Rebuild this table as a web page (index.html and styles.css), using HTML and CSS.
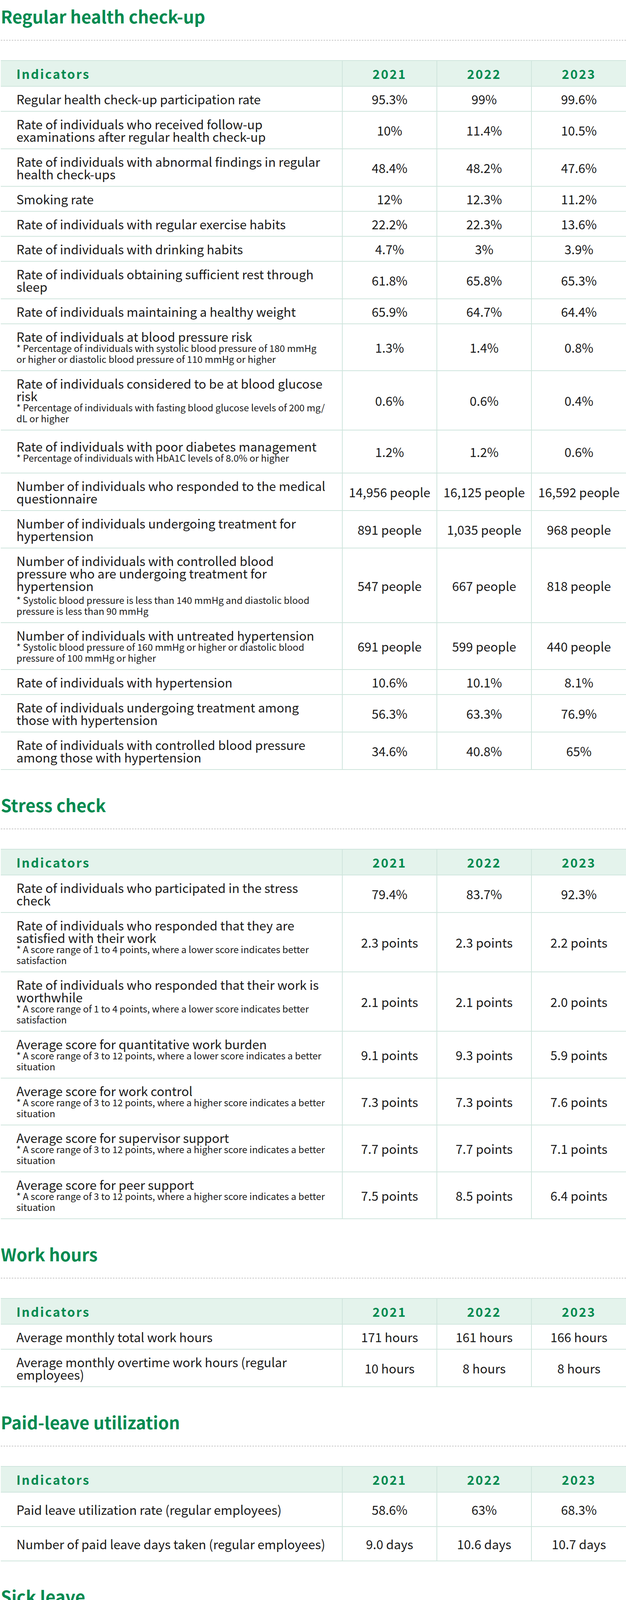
FILE: index.html
```html
<!DOCTYPE html>
<html lang="en">
<head>
<meta charset="utf-8">
<title>Health indicators</title>
<link rel="stylesheet" href="styles.css">
</head>
<body>
<main class="page">

<section class="block">
  <h2 class="block-title">Regular health check-up</h2>
  <table class="data">
    <colgroup><col class="c-ind"><col class="c-y"><col class="c-y"><col class="c-y"></colgroup>
    <thead><tr><th class="h-ind">Indicators</th><th>2021</th><th>2022</th><th>2023</th></tr></thead>
    <tbody>
      <tr><td class="label">Regular health check-up participation rate</td><td>95.3%</td><td>99%</td><td>99.6%</td></tr>
      <tr><td class="label">Rate of individuals who received follow-up<br>examinations after regular health check-up</td><td>10%</td><td>11.4%</td><td>10.5%</td></tr>
      <tr><td class="label">Rate of individuals with abnormal findings in regular<br>health check-ups</td><td>48.4%</td><td>48.2%</td><td>47.6%</td></tr>
      <tr><td class="label">Smoking rate</td><td>12%</td><td>12.3%</td><td>11.2%</td></tr>
      <tr><td class="label">Rate of individuals with regular exercise habits</td><td>22.2%</td><td>22.3%</td><td>13.6%</td></tr>
      <tr><td class="label">Rate of individuals with drinking habits</td><td>4.7%</td><td>3%</td><td>3.9%</td></tr>
      <tr><td class="label">Rate of individuals obtaining sufficient rest through<br>sleep</td><td>61.8%</td><td>65.8%</td><td>65.3%</td></tr>
      <tr><td class="label">Rate of individuals maintaining a healthy weight</td><td>65.9%</td><td>64.7%</td><td>64.4%</td></tr>
      <tr><td class="label">Rate of individuals at blood pressure risk<p class="note">* Percentage of individuals with systolic blood pressure of 180 mmHg<br>or higher or diastolic blood pressure of 110 mmHg or higher</p></td><td>1.3%</td><td>1.4%</td><td>0.8%</td></tr>
      <tr><td class="label">Rate of individuals considered to be at blood glucose<br>risk<p class="note">* Percentage of individuals with fasting blood glucose levels of 200 mg/<br>dL or higher</p></td><td>0.6%</td><td>0.6%</td><td>0.4%</td></tr>
      <tr><td class="label label-roomy">Rate of individuals with poor diabetes management<p class="note">* Percentage of individuals with HbA1C levels of 8.0% or higher</p></td><td>1.2%</td><td>1.2%</td><td>0.6%</td></tr>
      <tr><td class="label">Number of individuals who responded to the medical<br>questionnaire</td><td>14,956 people</td><td>16,125 people</td><td>16,592 people</td></tr>
      <tr><td class="label">Number of individuals undergoing treatment for<br>hypertension</td><td>891 people</td><td>1,035 people</td><td>968 people</td></tr>
      <tr><td class="label">Number of individuals with controlled blood<br>pressure who are undergoing treatment for<br>hypertension<p class="note note-gap">* Systolic blood pressure is less than 140 mmHg and diastolic blood<br>pressure is less than 90 mmHg</p></td><td>547 people</td><td>667 people</td><td>818 people</td></tr>
      <tr><td class="label">Number of individuals with untreated hypertension<p class="note">* Systolic blood pressure of 160 mmHg or higher or diastolic blood<br>pressure of 100 mmHg or higher</p></td><td>691 people</td><td>599 people</td><td>440 people</td></tr>
      <tr><td class="label">Rate of individuals with hypertension</td><td>10.6%</td><td>10.1%</td><td>8.1%</td></tr>
      <tr><td class="label">Rate of individuals undergoing treatment among<br>those with hypertension</td><td>56.3%</td><td>63.3%</td><td>76.9%</td></tr>
      <tr><td class="label">Rate of individuals with controlled blood pressure<br>among those with hypertension</td><td>34.6%</td><td>40.8%</td><td>65%</td></tr>
    </tbody>
  </table>
</section>

<section class="block">
  <h2 class="block-title">Stress check</h2>
  <table class="data">
    <colgroup><col class="c-ind"><col class="c-y"><col class="c-y"><col class="c-y"></colgroup>
    <thead><tr><th class="h-ind">Indicators</th><th>2021</th><th>2022</th><th>2023</th></tr></thead>
    <tbody>
      <tr><td class="label">Rate of individuals who participated in the stress<br>check</td><td>79.4%</td><td>83.7%</td><td>92.3%</td></tr>
      <tr><td class="label">Rate of individuals who responded that they are<br>satisfied with their work<p class="note">* A score range of 1 to 4 points, where a lower score indicates better<br>satisfaction</p></td><td>2.3 points</td><td>2.3 points</td><td>2.2 points</td></tr>
      <tr><td class="label">Rate of individuals who responded that their work is<br>worthwhile<p class="note">* A score range of 1 to 4 points, where a lower score indicates better<br>satisfaction</p></td><td>2.1 points</td><td>2.1 points</td><td>2.0 points</td></tr>
      <tr><td class="label">Average score for quantitative work burden<p class="note">* A score range of 3 to 12 points, where a lower score indicates a better<br>situation</p></td><td>9.1 points</td><td>9.3 points</td><td>5.9 points</td></tr>
      <tr><td class="label">Average score for work control<p class="note">* A score range of 3 to 12 points, where a higher score indicates a better<br>situation</p></td><td>7.3 points</td><td>7.3 points</td><td>7.6 points</td></tr>
      <tr><td class="label">Average score for supervisor support<p class="note">* A score range of 3 to 12 points, where a higher score indicates a better<br>situation</p></td><td>7.7 points</td><td>7.7 points</td><td>7.1 points</td></tr>
      <tr><td class="label">Average score for peer support<p class="note">* A score range of 3 to 12 points, where a higher score indicates a better<br>situation</p></td><td>7.5 points</td><td>8.5 points</td><td>6.4 points</td></tr>
    </tbody>
  </table>
</section>

<section class="block">
  <h2 class="block-title">Work hours</h2>
  <table class="data">
    <colgroup><col class="c-ind"><col class="c-y"><col class="c-y"><col class="c-y"></colgroup>
    <thead><tr><th class="h-ind">Indicators</th><th>2021</th><th>2022</th><th>2023</th></tr></thead>
    <tbody>
      <tr><td class="label">Average monthly total work hours</td><td>171 hours</td><td>161 hours</td><td>166 hours</td></tr>
      <tr><td class="label">Average monthly overtime work hours (regular<br>employees)</td><td>10 hours</td><td>8 hours</td><td>8 hours</td></tr>
    </tbody>
  </table>
</section>

<section class="block">
  <h2 class="block-title">Paid-leave utilization</h2>
  <table class="data">
    <colgroup><col class="c-ind"><col class="c-y"><col class="c-y"><col class="c-y"></colgroup>
    <thead><tr><th class="h-ind">Indicators</th><th>2021</th><th>2022</th><th>2023</th></tr></thead>
    <tbody>
      <tr><td class="label label-tall">Paid leave utilization rate (regular employees)</td><td>58.6%</td><td>63%</td><td>68.3%</td></tr>
      <tr><td class="label label-tall">Number of paid leave days taken (regular employees)</td><td>9.0 days</td><td>10.6 days</td><td>10.7 days</td></tr>
    </tbody>
  </table>
</section>

<section class="block">
  <h2 class="block-title">Sick leave</h2>
  <table class="data">
    <colgroup><col class="c-ind"><col class="c-y"><col class="c-y"><col class="c-y"></colgroup>
    <thead><tr><th class="h-ind">Indicators</th><th>2021</th><th>2022</th><th>2023</th></tr></thead>
    <tbody>
      <tr><td class="label">Number of individuals on leave due to mental health<br>issues</td><td>-</td><td>-</td><td>170 people</td></tr>
      <tr><td class="label">Number of individuals who returned from leave<br>during the fiscal year</td><td>-</td><td>-</td><td>68 people</td></tr>
    </tbody>
  </table>
</section>

<section class="block">
  <h2 class="block-title">Occupational accidents</h2>
  <table class="data">
    <colgroup><col class="c-ind"><col class="c-y"><col class="c-y"><col class="c-y"></colgroup>
    <thead><tr><th class="h-ind">Indicators</th><th>2021</th><th>2022</th><th>2023</th></tr></thead>
    <tbody>
      <tr><td class="label">Number of occupational accidents</td><td>282</td><td>235</td><td>267</td></tr>
    </tbody>
  </table>
</section>

<section class="block">
  <h2 class="block-title">Measures related to women's health issues</h2>
  <table class="data">
    <colgroup><col class="c-ind"><col class="c-y"><col class="c-y"><col class="c-y"></colgroup>
    <thead><tr><th class="h-ind">Indicators</th><th>2021</th><th>2022</th><th>2023</th></tr></thead>
    <tbody>
      <tr><td class="label">Number of participants in seminars on women's<br>health issues</td><td>100 people</td><td>47 people</td><td>94 people</td></tr>
      <tr><td class="label">Satisfaction level of participants in seminars on<br>women's health issues<p class="note">* Rate of participants who responded that they would like to<br>participate again</p></td><td>-</td><td>-</td><td>71.3%</td></tr>
    </tbody>
  </table>
</section>

<section class="block">
  <h2 class="block-title">Measures for employees to establish an exercise routine</h2>
  <table class="data">
    <colgroup><col class="c-ind"><col class="c-y"><col class="c-y"><col class="c-y"></colgroup>
    <thead><tr><th class="h-ind">Indicators</th><th>2021</th><th>2022</th><th>2023</th></tr></thead>
    <tbody>
      <tr><td class="label">Participation rate in the walking event<p class="note">* Percentage of participants among all employees of Sugi Pharmacy</p></td><td>27.4%</td><td>28.1%</td><td>21.4%</td></tr>
    </tbody>
  </table>
</section>

<section class="block">
  <h2 class="block-title">Specific health guidance</h2>
  <table class="data">
    <colgroup><col class="c-ind"><col class="c-y"><col class="c-y"><col class="c-y"></colgroup>
    <thead><tr><th class="h-ind">Indicators</th><th>2021</th><th>2022</th><th>2023</th></tr></thead>
    <tbody>
      <tr><td class="label">Rate of individuals who received specific health<br>screenings</td><td>95.3%</td><td>99%</td><td>99.6%</td></tr>
      <tr><td class="label">Implementation rate of specific health guidance</td><td>57.9%</td><td>40.1%</td><td>28.4%</td></tr>
    </tbody>
  </table>
</section>

<section class="block">
  <h2 class="block-title">Work engagement</h2>
  <table class="data">
    <colgroup><col class="c-ind"><col class="c-y"><col class="c-y"><col class="c-y"></colgroup>
    <thead><tr><th class="h-ind">Indicators</th><th>2021</th><th>2022</th><th>2023</th></tr></thead>
    <tbody>
      <tr><td class="label">Average score of work engagement<ul class="bullets"><li>Measurement method: Measured using the Utrecht Work<br>Engagement Scale (Ultra-short version, 3-item version)</li><li>Average scores for "Vigor," "Dedication," and "Absorption" on a scale<br>of 6 points</li></ul></td><td>3.0 points</td><td>3.1 points</td><td>3.4 points</td></tr>
      <tr><td class="label">Number of individuals measured</td><td>17,705 people</td><td>15,345 people</td><td>31,852 people</td></tr>
      <tr><td class="label">Response rate<p class="note">* Among all employees of Sugi Pharmacy</p></td><td>51.5%</td><td>43.9%</td><td>87.5%</td></tr>
    </tbody>
  </table>
</section>

<section class="block">
  <h2 class="block-title">Presenteeism</h2>
  <table class="data">
    <colgroup><col class="c-ind"><col class="c-y"><col class="c-y"><col class="c-y"></colgroup>
    <thead><tr><th class="h-ind">Indicators</th><th>2021</th><th>2022</th><th>2023</th></tr></thead>
    <tbody>
      <tr><td class="label">Presenteeism<ul class="bullets"><li>Measurement method: Measured using the SPQ-Tokyo University<br>one-item version</li><li>Respondents evaluate their work performance over the past four<br>weeks on a scale of 1 to 100%, with 100% indicating their<br>performance when not affected by illness or injury.</li></ul></td><td>-</td><td>79.4%</td><td>84.2%</td></tr>
      <tr><td class="label">Number of individuals measured</td><td>-</td><td>692 people</td><td>17,616 people</td></tr>
      <tr><td class="label">Response rate<p class="note">* Among all employees of Sugi Pharmacy</p></td><td>-</td><td>2.0%</td><td>46.7%</td></tr>
    </tbody>
  </table>
</section>

<section class="block">
  <h2 class="block-title">Absenteeism</h2>
  <table class="data">
    <colgroup><col class="c-ind"><col class="c-y"><col class="c-y"><col class="c-y"></colgroup>
    <thead><tr><th class="h-ind">Indicators</th><th>2021</th><th>2022</th><th>2023</th></tr></thead>
    <tbody>
      <tr><td class="label">Absenteeism<ul class="bullets"><li>Measurement method: Calculated based on the number of days of<br>unplanned absences and leave of absence due to illness or injury</li><li>Average number of days calculated by dividing the total number of<br>days of unplanned absences and leave of absence by the number of<br>employees</li></ul></td><td>-</td><td>1.04 days</td><td>0.82 days</td></tr>
      <tr><td class="label">Number of individuals measured</td><td>-</td><td>34,961 people</td><td>39,582 people</td></tr>
      <tr><td class="label">Total number of days of unplanned absences and<br>leave of absence due to illness or injury</td><td>-</td><td>36,471 days</td><td>32,622 days</td></tr>
    </tbody>
  </table>
</section>

</main>
</body>
</html>
```

FILE: styles.css
```css
html, body {
  margin: 0;
  padding: 0;
  background: #ffffff;
}

body {
  font-family: "Noto Sans CJK JP", "Source Sans Pro", "Noto Sans", sans-serif;
  color: #1a1a1a;
}

.page {
  padding-left: 2px;
  width: 1600px;
}

.block + .block {
  margin-top: 48px;
}

.block-title {
  margin: 0;
  padding: 5px 0 27px 0;
  font-size: 44px;
  line-height: 72px;
  font-weight: 700;
  color: #008a50;
  white-space: nowrap;
  background-image: repeating-linear-gradient(90deg, #c8c8c8 0, #c8c8c8 4px, transparent 4px, transparent 7px);
  background-repeat: no-repeat;
  background-size: 100% 2px;
  background-position: left bottom;
}

.data {
  width: 1600px;
  margin-top: 50px;
  border-collapse: collapse;
  table-layout: fixed;
}

.c-ind { width: 874px; }
.c-y { width: 242px; }

.data th {
  background: #e4f3ec;
  color: #008a50;
  font-size: 32px;
  line-height: 34px;
  font-weight: 700;
  letter-spacing: 3px;
  padding: 15px 0;
  text-align: center;
  border-top: 2px solid #cfe5dd;
  border-bottom: 2px solid #cfe5dd;
  border-left: 2px solid #cfe5dd;
}

.data th.h-ind {
  text-align: left;
  padding-left: 40px;
  border-left: none;
}

.data td {
  font-size: 32px;
  line-height: 32px;
  padding: 15px 0;
  text-align: center;
  vertical-align: middle;
  white-space: nowrap;
  border-bottom: 2px solid #cfe5dd;
  border-left: 2px solid #cfe5dd;
}

.data td.label {
  text-align: left;
  padding: 15px 10px 15px 40px;
  border-left: none;
}

.data td.label-roomy {
  padding-top: 24px;
  padding-bottom: 24px;
}

.data td.label-tall {
  padding-top: 27px;
  padding-bottom: 27px;
}

.note {
  margin: 0;
  font-size: 24px;
  line-height: 28px;
}

.note-gap {
  margin-top: 7px;
}

.bullets {
  margin: 0;
  padding: 0 0 0 12px;
  list-style: none;
  font-size: 24px;
  line-height: 28px;
}

.bullets li {
  padding-left: 24px;
  text-indent: -24px;
}

.bullets li::before {
  content: "\2022";
  display: inline-block;
  width: 24px;
  text-indent: 0;
  font-size: 18px;
  line-height: 28px;
  vertical-align: top;
}
```
